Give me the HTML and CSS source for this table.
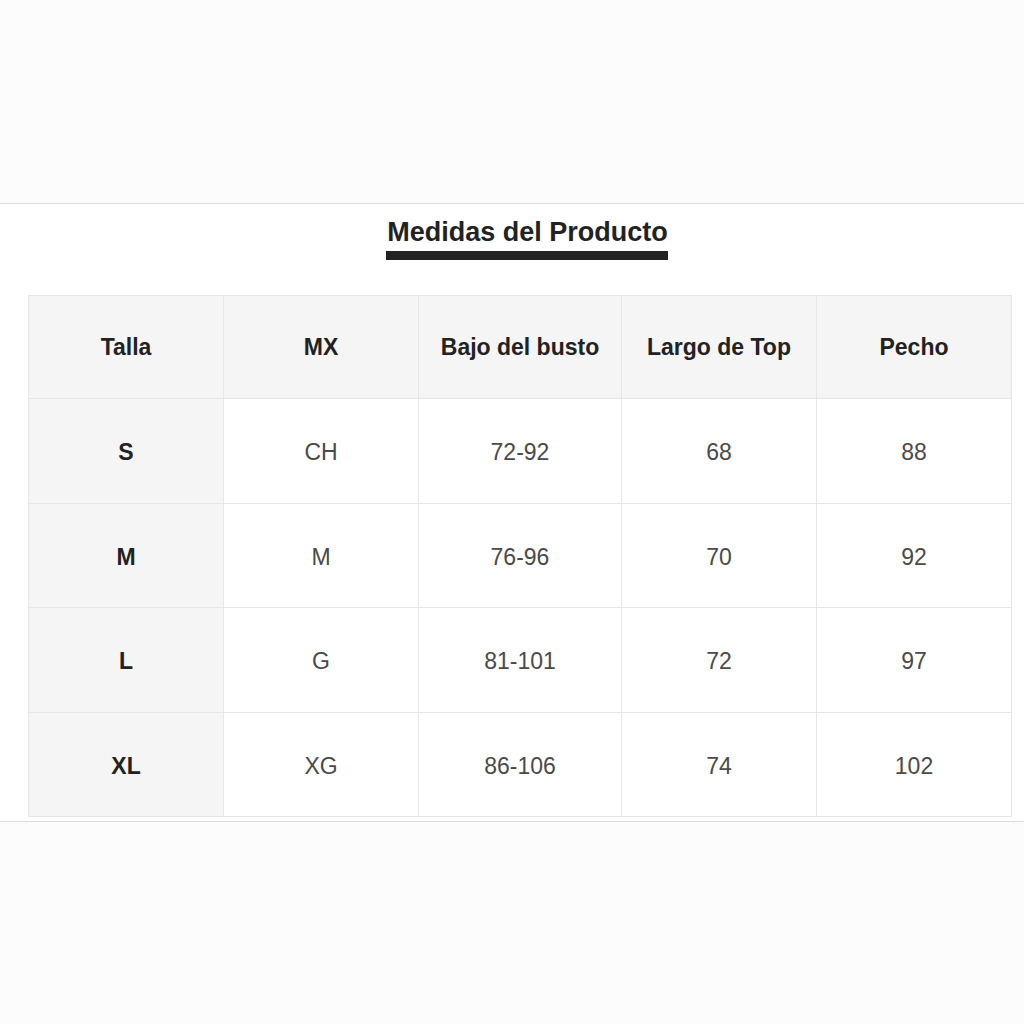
FILE: index.html
```html
<!DOCTYPE html>
<html lang="es">
<head>
<meta charset="utf-8">
<title>Medidas del Producto</title>
<link rel="stylesheet" href="styles.css">
</head>
<body>
<div class="top-space"></div>
<section class="sheet">
  <div class="title-wrap">
    <h2 class="title">Medidas del Producto</h2>
  </div>
  <table class="sizes">
    <colgroup>
      <col class="c1"><col class="c2"><col class="c3"><col class="c4"><col class="c5">
    </colgroup>
    <thead>
      <tr><th>Talla</th><th>MX</th><th>Bajo del busto</th><th>Largo de Top</th><th>Pecho</th></tr>
    </thead>
    <tbody>
      <tr><th>S</th><td>CH</td><td>72-92</td><td>68</td><td>88</td></tr>
      <tr><th>M</th><td>M</td><td>76-96</td><td>70</td><td>92</td></tr>
      <tr><th>L</th><td>G</td><td>81-101</td><td>72</td><td>97</td></tr>
      <tr><th>XL</th><td>XG</td><td>86-106</td><td>74</td><td>102</td></tr>
    </tbody>
  </table>
</section>
</body>
</html>
```
FILE: styles.css
```css
html, body {
  margin: 0;
  padding: 0;
  background: #fcfcfc;
  font-family: "Liberation Sans", Arial, sans-serif;
}
.top-space {
  height: 203px;
}
.sheet {
  background: #ffffff;
  border-top: 1px solid #dcdcdc;
  border-bottom: 1px solid #dcdcdc;
  padding: 13px 0 4px 0;
}
.title-wrap {
  display: flex;
  justify-content: center;
  padding-left: 30px;
}
.title {
  margin: 0;
  font-size: 27px;
  line-height: 30px;
  font-weight: bold;
  color: #222;
  padding: 0 0 4px 1px;
  border-bottom: 9px solid #222;
}
.sizes {
  margin: 35px 0 0 28px;
  border-collapse: collapse;
  table-layout: fixed;
  width: 984px;
}
.c1, .c2, .c4, .c5 { width: 195px; }
.c3 { width: 203px; }
.sizes th, .sizes td {
  border: 1px solid #e6e6e6;
  height: 99.5px;
  padding: 4px 0 0 0;
  text-align: center;
  vertical-align: middle;
  font-size: 23px;
}
.sizes thead th {
  background: #f5f5f5;
  color: #222;
  font-weight: bold;
  height: 102px;
  padding: 0;
}
.sizes tbody th {
  background: #f5f5f5;
  color: #222;
  font-weight: bold;
}
.sizes tbody td {
  background: #fff;
  color: #4a4a4a;
  font-weight: normal;
}
```
